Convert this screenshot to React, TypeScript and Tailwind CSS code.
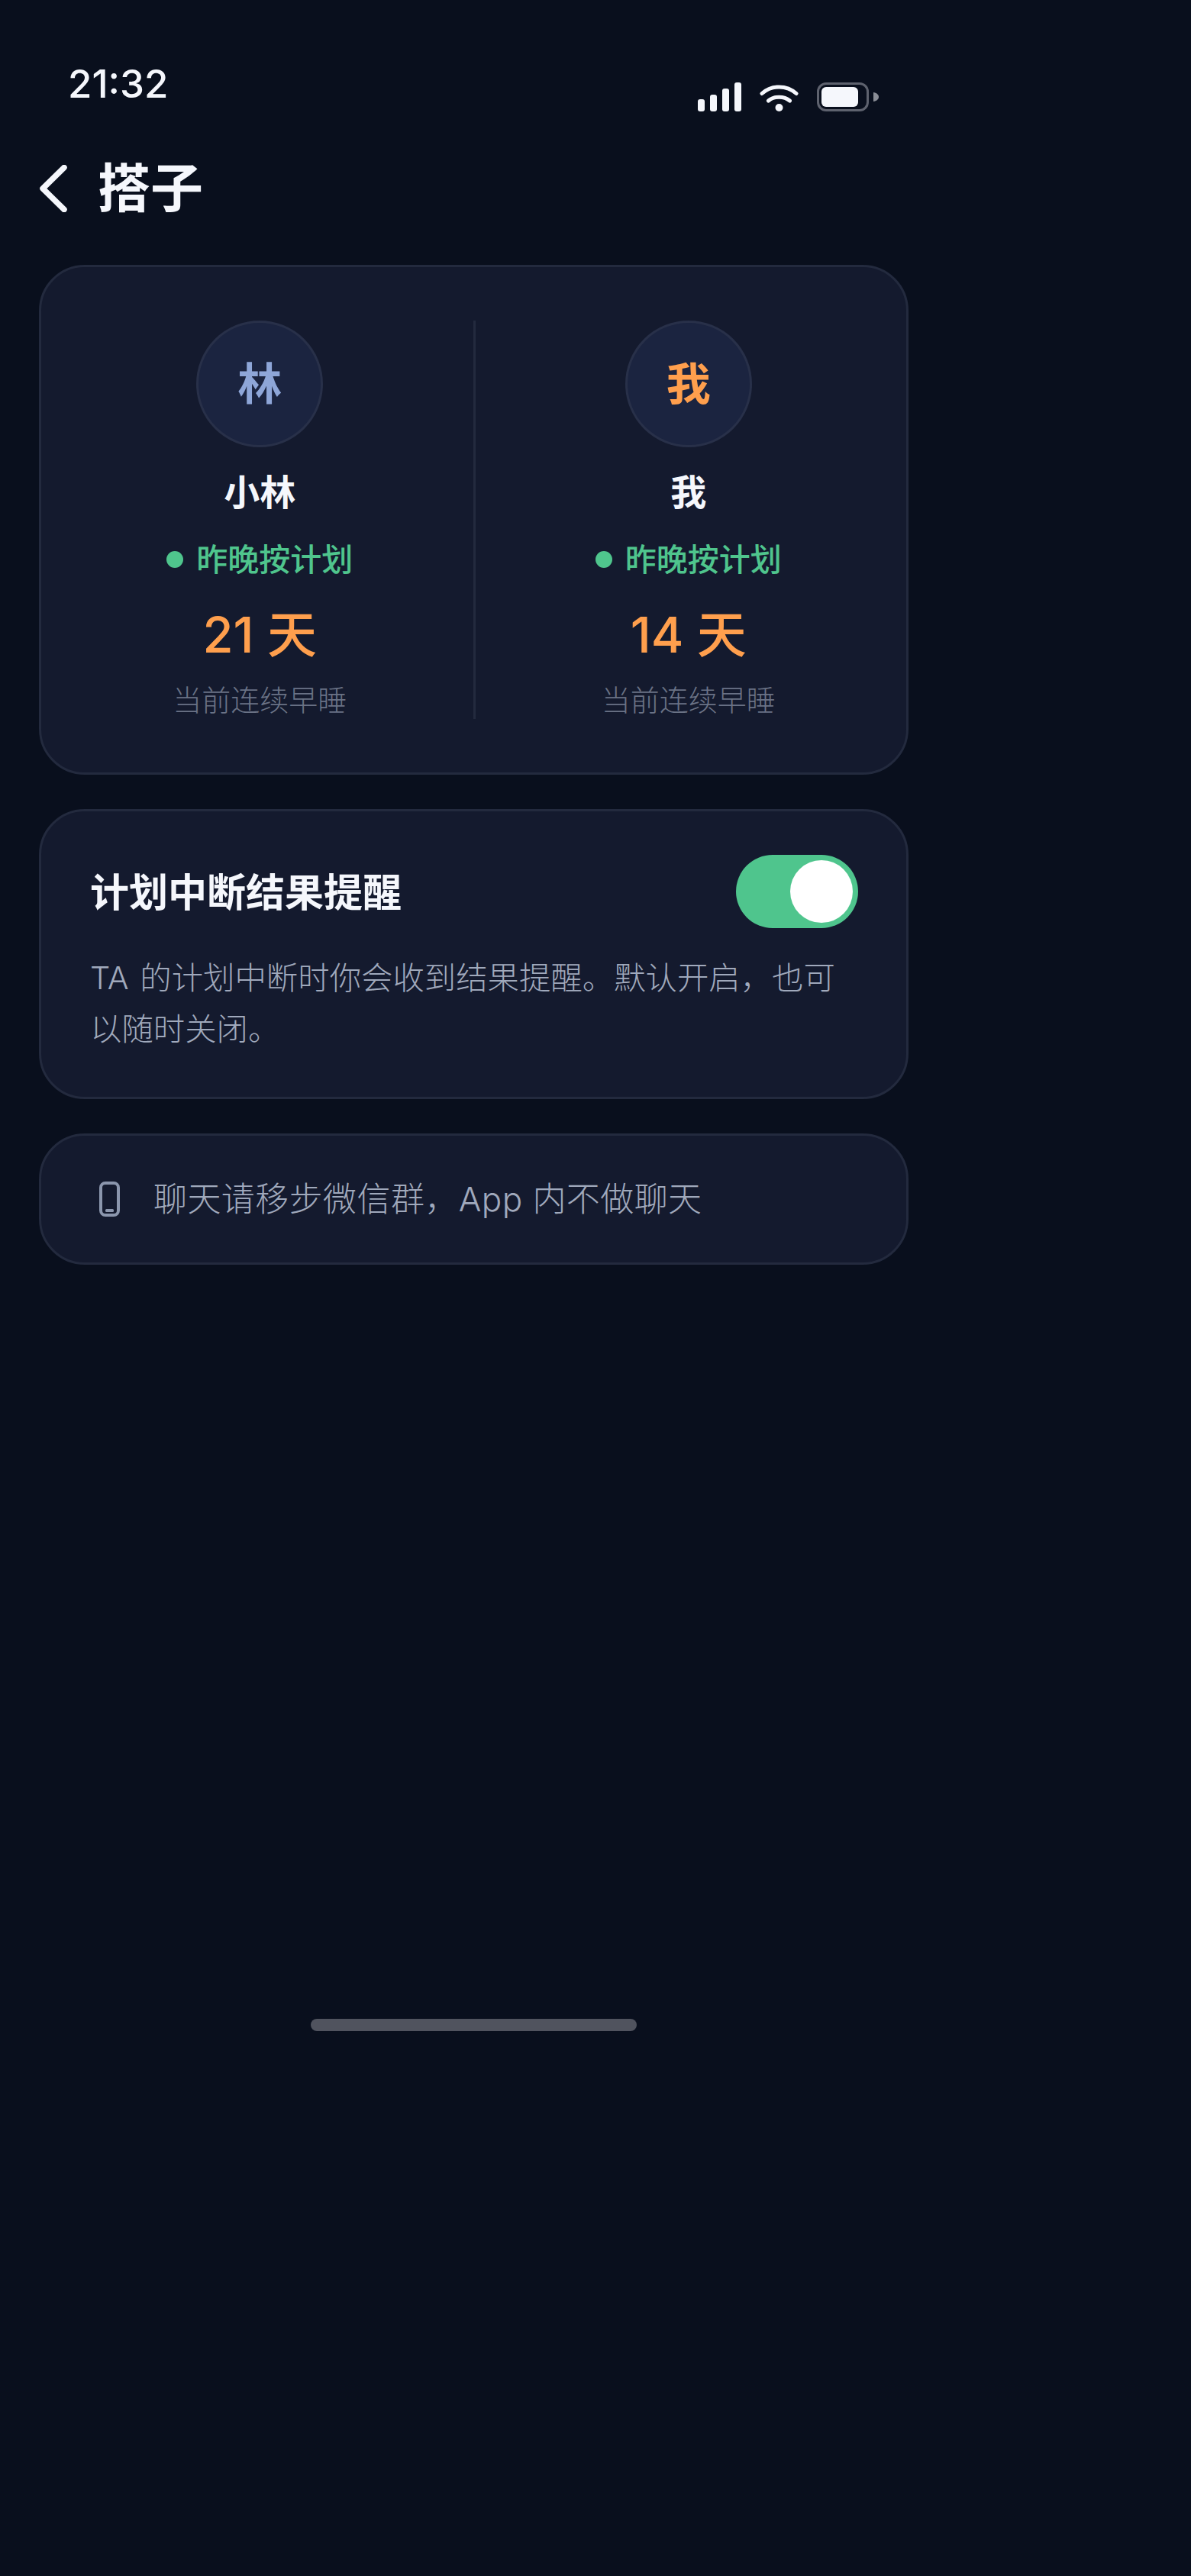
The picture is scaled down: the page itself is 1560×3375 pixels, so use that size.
const FONT = "font-['Inter','Noto_Sans_CJK_SC',sans-serif]";

function Person({ initial, name, days, initialColor }: { initial: string; name: string; days: string; initialColor: string }) {
  return (
    <div className="flex flex-1 flex-col items-center">
      <div className={`flex h-[166px] w-[166px] items-center justify-center rounded-full border-[3px] border-[#283049] bg-[#1b2440] text-[58px] font-semibold leading-none ${initialColor}`}>
        {initial}
      </div>
      <div className="mt-[29px] text-[47px] font-semibold leading-[60px] text-[#f5f7fc]">{name}</div>
      <div className="mt-[33px] flex items-center gap-[17px] text-[41px] font-medium leading-[50px] text-[#4fc58d]">
        <span className="h-[22px] w-[22px] rounded-full bg-[#4fc58d]" />
        <span>昨晚按计划</span>
      </div>
      <div className="mt-[36px] text-[65px] font-medium leading-[76px] text-[#ff9f4d]">{days}</div>
      <div className="mt-[22px] text-[38px] font-light leading-[50px] text-[#6a7285]">当前连续早睡</div>
    </div>
  );
}

export default function App() {
  return (
    <div className={`min-h-[3375px] bg-[#090f1d] ${FONT}`}>
      <div className="w-[1240px]">
        <div className="flex h-[147px] items-end justify-between pl-[89px] pr-[89px]">
          <div className="text-[51px] font-medium leading-[74px] text-[#f5f7fc]">21:32</div>
          <div className="mb-[1px] flex items-end">
            <div className="flex items-end gap-[7px]">
              <span className="h-[16px] w-[9px] rounded-[3px] bg-[#f5f7fc]" />
              <span className="h-[22px] w-[9px] rounded-[3px] bg-[#f5f7fc]" />
              <span className="h-[30px] w-[9px] rounded-[3px] bg-[#f5f7fc]" />
              <span className="h-[38px] w-[9px] rounded-[3px] bg-[#f5f7fc]" />
            </div>
            <svg className="ml-[24px]" width="51" height="36" viewBox="0 0 51 36" fill="none">
              <path d="M3 12.5C15.5 1 35.5 1 48 12.5" stroke="#f5f7fc" strokeWidth="5" strokeLinecap="round" />
              <path d="M11.5 22C19 15.5 32 15.5 39.5 22" stroke="#f5f7fc" strokeWidth="5" strokeLinecap="round" />
              <circle cx="25.5" cy="31" r="5" fill="#f5f7fc" />
            </svg>
            <div className="ml-[24px] flex h-[38px] w-[68px] items-center rounded-[12px] border-[3px] border-[#5e626e] pl-[3px]">
              <span className="h-[26px] w-[48px] rounded-[6px] bg-[#f5f7fc]" />
            </div>
            <svg className="mb-[13px] ml-[6px]" width="7" height="12" viewBox="0 0 7 12">
              <path d="M0 0C4 0.5 7 3 7 6C7 9 4 11.500 0 12Z" fill="#8a8d96" />
            </svg>
          </div>
        </div>

        <div className="mt-[55px] flex h-[90px] items-center pl-[52px]">
          <svg width="36" height="62" viewBox="0 0 36 62" fill="none">
            <path d="M32 3.500L4 31L32 58.500" stroke="#f5f7fc" strokeWidth="7.500" strokeLinecap="round" strokeLinejoin="round" />
          </svg>
          <h1 className="ml-[40px] text-[69px] font-semibold leading-[90px] text-[#f5f7fc]">搭子</h1>
        </div>

        <div className="mt-[55px] flex flex-col gap-[45px] pl-[51px] pr-[50px]">
          <div className="flex rounded-[60px] border-[3px] border-[#232a3e] bg-[#141a2e] pb-[70px] pl-[7px] pr-[6px] pt-[70px]">
            <Person initial="林" name="小林" days="21 天" initialColor="text-[#8ea6d8]" />
            <div className="w-[3px] bg-[#232a3e]" />
            <Person initial="我" name="我" days="14 天" initialColor="text-[#ff9f4d]" />
          </div>

          <div className="rounded-[60px] border-[3px] border-[#232a3e] bg-[#141a2e] pb-[55px] pl-[64px] pr-[63px] pt-[57px]">
            <div className="flex h-[96px] items-center justify-between">
              <div className="pt-[3px] text-[51px] font-semibold leading-[70px] text-[#f5f7fc]">计划中断结果提醒</div>
              <div className="flex h-[96px] w-[160px] items-center justify-end rounded-full bg-[#4fc58d] pr-[7px]">
                <span className="h-[82px] w-[82px] rounded-full bg-white" />
              </div>
            </div>
            <p className="mt-[32px] text-[41.400px] font-light leading-[67px] text-[#a0a9bc] [word-spacing:3px]">
              TA 的计划中断时你会收到结果提醒。默认开启，也可以随时关闭。
            </p>
          </div>

          <div className="flex h-[172px] items-center rounded-[60px] border-[3px] border-[#232a3e] bg-[#141a2e] pl-[76px]">
            <svg width="27" height="46" viewBox="0 0 27 46" fill="none">
              <rect x="2" y="2" width="23" height="42" rx="6" stroke="#8b96ad" strokeWidth="4" />
              <rect x="8" y="36" width="11" height="4" rx="1.500" fill="#8b96ad" />
            </svg>
            <span className="ml-[44px] text-[44px] font-light leading-[60px] tracking-[0.42px] text-[#a0a9bc]">聊天请移步微信群，App 内不做聊天</span>
          </div>
        </div>

        <div className="mt-[988px] flex justify-center">
          <div className="h-[16px] w-[427px] rounded-full bg-[#50535e]" />
        </div>
      </div>
    </div>
  );
}
